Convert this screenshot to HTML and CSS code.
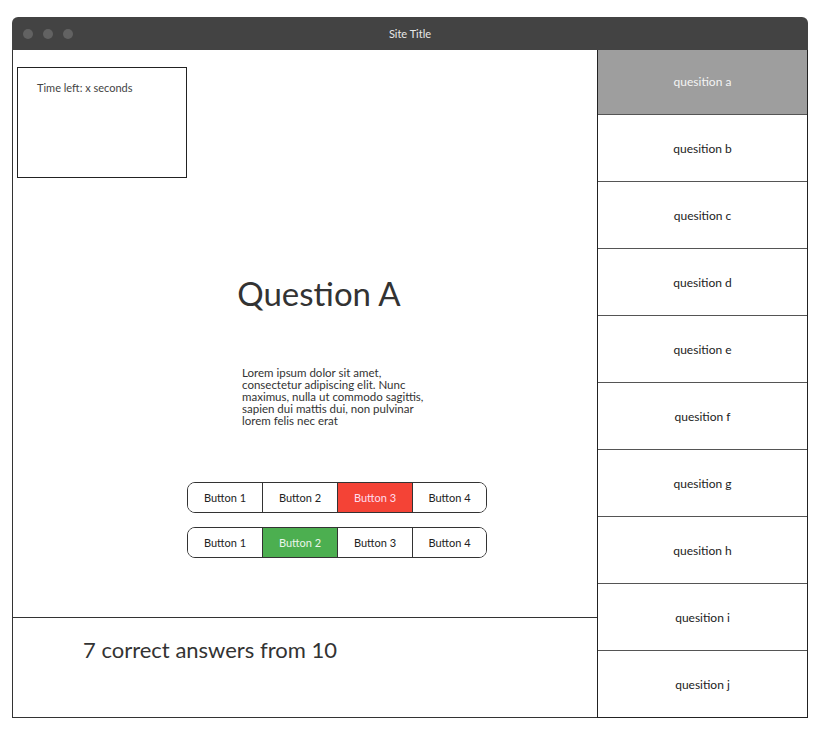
FILE: index.html
```html
<!DOCTYPE html>
<html>
<head>
<meta charset="utf-8">
<link rel="stylesheet" href="styles.css">
</head>
<body>
<div class="window">
  <div class="titlebar">
    <div class="dots"><span class="dot"></span><span class="dot"></span><span class="dot"></span></div>
    <div class="title">Site Title</div>
  </div>
  <div class="content">
    <div class="main">
      <div class="stage">
        <div class="timer">Time left: x seconds</div>
        <h1 class="question">Question A</h1>
        <p class="lorem">Lorem ipsum dolor sit amet, consectetur adipiscing elit. Nunc maximus, nulla ut commodo sagittis, sapien dui mattis dui, non pulvinar lorem felis nec erat</p>
        <div class="btn-group">
          <button class="btn">Button 1</button>
          <button class="btn">Button 2</button>
          <button class="btn wrong">Button 3</button>
          <button class="btn">Button 4</button>
        </div>
        <div class="btn-group">
          <button class="btn">Button 1</button>
          <button class="btn right">Button 2</button>
          <button class="btn">Button 3</button>
          <button class="btn">Button 4</button>
        </div>
      </div>
      <div class="score">7 correct answers from 10</div>
    </div>
    <div class="sidebar">
      <div class="item active">quesition a</div>
      <div class="item">quesition b</div>
      <div class="item">quesition c</div>
      <div class="item">quesition d</div>
      <div class="item">quesition e</div>
      <div class="item">quesition f</div>
      <div class="item">quesition g</div>
      <div class="item">quesition h</div>
      <div class="item">quesition i</div>
      <div class="item">quesition j</div>
    </div>
  </div>
</div>
</body>
</html>
```
FILE: styles.css
```css
html, body {
  margin: 0;
  padding: 0;
  background: #fff;
}
body {
  font-family: Lato, "Open Sans", sans-serif;
  color: #333;
  padding: 17px 0 0 12px;
}
.window {
  width: 796px;
  display: flex;
  flex-direction: column;
}
.titlebar {
  height: 33px;
  background: #434343;
  border-radius: 6px 6px 0 0;
  display: flex;
  align-items: center;
  position: relative;
}
.dots {
  display: flex;
  gap: 10px;
  padding-left: 11px;
}
.dot {
  width: 10px;
  height: 10px;
  border-radius: 50%;
  background: #626262;
}
.title {
  position: absolute;
  left: 0;
  right: 0;
  text-align: center;
  color: #e8e8e8;
  font-size: 11px;
}
.content {
  display: flex;
}
.main {
  width: 584px;
  border-left: 1px solid #333;
  border-bottom: 1px solid #333;
  display: flex;
  flex-direction: column;
}
.stage {
  height: 567px;
  border-bottom: 1px solid #333;
  display: flex;
  flex-direction: column;
  align-items: center;
}
.timer {
  align-self: flex-start;
  margin: 17px 0 0 4px;
  width: 149px;
  height: 96px;
  border: 1px solid #222;
  padding: 13px 0 0 19px;
  font-size: 11px;
  color: #444;
}
.question {
  margin: 95px 0 0 28px;
  font-size: 33px;
  font-weight: 400;
  line-height: 40px;
  color: #333;
}
.lorem {
  margin: 54px 0 0 70px;
  width: 196px;
  font-size: 11.5px;
  line-height: 12px;
  color: #333;
}
.btn-group {
  display: flex;
  margin: 0 0 0 64px;
  border: 1px solid #333;
  border-radius: 8px;
  overflow: hidden;
}
.lorem + .btn-group {
  margin-top: 55px;
}
.btn-group + .btn-group {
  margin-top: 14px;
}
.btn {
  width: 75px;
  height: 29px;
  border: none;
  border-left: 1px solid #333;
  background: #fff;
  font-family: inherit;
  font-size: 11px;
  color: #222;
  padding: 0;
}
.btn:first-child {
  border-left: none;
  width: 74px;
}
.btn:last-child {
  width: 74px;
}
.btn.wrong {
  background: #f44336;
  color: #fde;
}
.btn.right {
  background: #4caf50;
  color: #eaf5ea;
}
.score {
  height: 99px;
  padding: 18px 0 0 70px;
  box-sizing: border-box;
  font-size: 22px;
  color: #333;
}
.sidebar {
  width: 209px;
  margin-top: -3px;
  border: 1px solid #222;
  display: flex;
  flex-direction: column;
}
.item {
  height: 66px;
  display: flex;
  align-items: center;
  justify-content: center;
  font-size: 12px;
  color: #222;
  border-top: 1px solid #555;
}
.item:first-child {
  border-top: none;
}
.item.active {
  background: #9e9e9e;
  color: #f4f4f4;
}
```
